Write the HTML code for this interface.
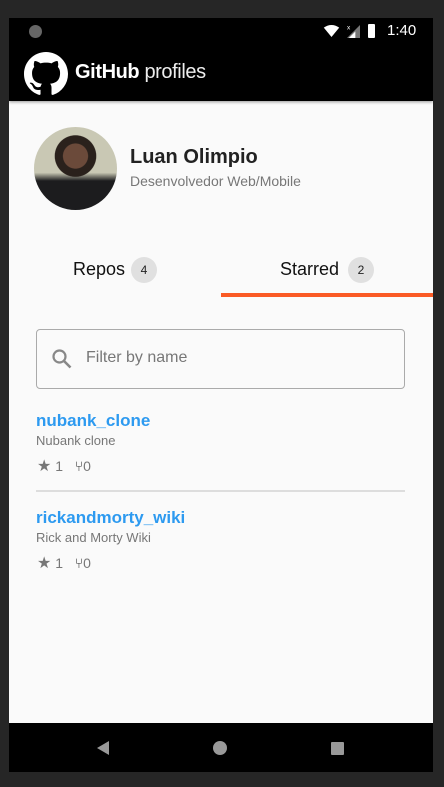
<!DOCTYPE html>
<html><head><meta charset="utf-8"><style>
*{margin:0;padding:0;box-sizing:border-box}
body{width:444px;height:787px;background:#262626;position:relative;overflow:hidden;font-family:"Liberation Sans",sans-serif}
.scr{position:absolute;left:9px;top:18px;width:424px;height:754px;background:#fafafa;overflow:hidden}
.sb{position:absolute;left:0;top:0;width:424px;height:26px;background:#000}
.ab{position:absolute;left:0;top:26px;width:424px;height:57px;background:#000;box-shadow:0 1px 3px rgba(0,0,0,.4)}
.nav{position:absolute;left:0;top:705px;width:424px;height:49px;background:#000}
.a{position:absolute}
</style></head><body>
<div class="scr">
 <div class="sb">
  <div class="a" style="left:20px;top:7px;width:13px;height:13px;border-radius:50%;background:#666"></div>
  <svg class="a" style="left:314px;top:7px" width="17" height="12" viewBox="0 0 18 14"><path d="M0 3Q9-3 18 3L9 14Z" fill="#fff"/></svg>
  <svg class="a" style="left:338px;top:6px" width="13" height="14" viewBox="0 0 14 15"><path d="M14 1V15H0Z" fill="#777"/><path d="M9 8V15H2Z" fill="#fff"/><text x="0" y="6" font-size="7" fill="#fff" font-family="Liberation Sans">x</text></svg>
  <div class="a" style="left:359px;top:6px;width:7px;height:14px;background:#fff;border-radius:1px"></div>
  <div class="a" style="left:378px;top:4px;color:#fff;font-size:15px">1:40</div>
 </div>
 <div class="ab">
  <svg class="a" style="left:15px;top:8px" width="44" height="44" viewBox="0 0 16 16"><path fill="#fff" d="M8 0C3.58 0 0 3.58 0 8c0 3.54 2.29 6.53 5.47 7.590.4.07.55-.17.55-.38 0-.19-.01-.82-.01-1.49-2.01.37-2.530-.49-2.690-.94-.09-.23-.48-.94-.82-1.13-.28-.15-.68-.52-.01-.53.63-.01 1.08.58 1.23.82.72 1.21 1.87.87 2.33.66.07-.52.28-.87.51-1.07-1.78-.2-3.64-.89-3.64-3.95 0-.87.31-1.59.82-2.15-.08-.2-.36-1.02.08-2.12 0 0 .67-.21 2.2.82.64-.18 1.32-.27 2-.27.68 0 1.36.09 2 .27 1.53-1.04 2.2-.82 2.2-.82.44 1.1.16 1.92.08 2.12.51.56.82 1.27.82 2.15 0 3.07-1.87 3.75-3.65 3.95.29.25.54.73.54 1.48 0 1.07-.01 1.93-.01 2.2 0 .21.15.46.55.38A8.013 8.013 0 0016 8c0-4.42-3.58-8-8-8z"/></svg>
  <div class="a" style="left:66px;top:17px;color:#fff;font-size:20px;letter-spacing:-0.4px"><b>GitHub</b> <span style="color:#eee">profiles</span></div>
 </div>
 <div class="a" style="left:25px;top:109px;width:83px;height:83px;border-radius:50%;background:radial-gradient(circle at 50% 35%,#6b4a3a 0 18%,#2a211c 19% 30%,transparent 31%),linear-gradient(#c9c8b4 0 55%,#1c1c1e 65%)"></div>
 <div class="a" style="left:121px;top:128px;font-size:20px;font-weight:bold;color:#222">Luan Olimpio</div>
 <div class="a" style="left:121px;top:155px;font-size:14px;color:#777">Desenvolvedor Web/Mobile</div>
 <div class="a" style="left:64px;top:241px;font-size:18px;color:#111">Repos</div>
 <div class="a" style="left:122px;top:239px;width:26px;height:26px;border-radius:50%;background:#e0e0e0;font-size:12px;text-align:center;line-height:26px;color:#222">4</div>
 <div class="a" style="left:271px;top:241px;font-size:18px;color:#111">Starred</div>
 <div class="a" style="left:339px;top:239px;width:26px;height:26px;border-radius:50%;background:#e0e0e0;font-size:12px;text-align:center;line-height:26px;color:#222">2</div>
 <div class="a" style="left:212px;top:275px;width:212px;height:4px;background:#fa5a25"></div>
 <div class="a" style="left:27px;top:311px;width:369px;height:60px;border:1px solid #aaa;border-radius:4px"></div>
 <svg class="a" style="left:42px;top:330px" width="22" height="22" viewBox="0 0 22 22"><circle cx="8.5" cy="8.5" r="6" fill="none" stroke="#888" stroke-width="2.2"/><path d="M13 13l6.5 6.5" stroke="#888" stroke-width="2.6"/></svg>
 <div class="a" style="left:77px;top:331px;font-size:16px;color:#777">Filter by name</div>
 <div class="a" style="left:27px;top:393px;font-size:17px;font-weight:bold;color:#2d9af0">nubank_clone</div>
 <div class="a" style="left:27px;top:415px;font-size:13px;color:#777">Nubank clone</div>
 <div class="a" style="left:28px;top:438px;font-size:14px;color:#777"><span style="font-size:16px">★</span> 1 &nbsp;&nbsp;<span style="color:#333">⑂</span>0</div>
 <div class="a" style="left:27px;top:472px;width:369px;height:2px;background:#ddd"></div>
 <div class="a" style="left:27px;top:490px;font-size:17px;font-weight:bold;color:#2d9af0">rickandmorty_wiki</div>
 <div class="a" style="left:27px;top:512px;font-size:13px;color:#777">Rick and Morty Wiki</div>
 <div class="a" style="left:28px;top:535px;font-size:14px;color:#777"><span style="font-size:16px">★</span> 1 &nbsp;&nbsp;<span style="color:#333">⑂</span>0</div>
 <div class="nav">
  <svg class="a" style="left:88px;top:18px" width="12" height="14"><path d="M12 0V14L0 7Z" fill="#999"/></svg>
  <div class="a" style="left:204px;top:18px;width:14px;height:14px;border-radius:50%;background:#999"></div>
  <div class="a" style="left:322px;top:19px;width:13px;height:13px;background:#999;border-radius:1px"></div>
 </div>
</div>
</body></html>
